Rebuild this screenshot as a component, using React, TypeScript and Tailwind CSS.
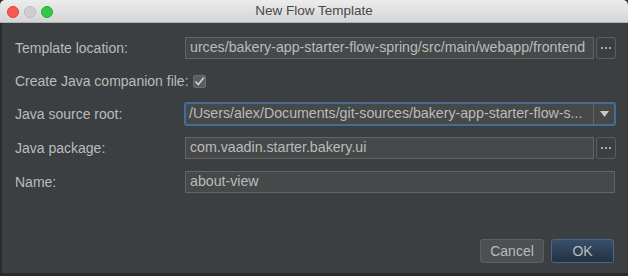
import React from 'react';

const FONT = { fontFamily: '"Liberation Sans", Arial, sans-serif' };

function Field({ value, wide = false }: { value: string; wide?: boolean }) {
  return (
    <div className={`h-[22px] ${wide ? 'w-[430px]' : 'w-[409px]'} bg-[#45494a] border border-[#646464] flex items-center px-[4px] overflow-hidden whitespace-nowrap text-[14.2px] text-[#bbbbbb]`}>
      {value}
    </div>
  );
}

function Browse() {
  return (
    <div className="h-[22px] w-[20px] ml-[2px] rounded-[3px] border border-[#5b5d5f] bg-[#3c3f41] flex items-center justify-center gap-[2px]">
      <span className="w-[2px] h-[2px] bg-[#a8a8a8]" />
      <span className="w-[2px] h-[2px] bg-[#a8a8a8]" />
      <span className="w-[2px] h-[2px] bg-[#a8a8a8]" />
    </div>
  );
}

function Row({ label, children, className = '' }: { label: string; children: React.ReactNode; className?: string }) {
  return (
    <div className={`flex items-center ${className}`}>
      <div className="w-[170px] shrink-0 text-[14px] text-[#bbbbbb]">{label}</div>
      {children}
    </div>
  );
}

export default function App() {
  return (
    <div className="w-[628px] h-[276px] bg-[#2b2b2b] flex flex-col" style={FONT}>
      {/* Title bar */}
      <div className="h-[23px] shrink-0 relative flex items-center justify-center bg-gradient-to-b from-[#ececec] to-[#d5d5d5] border-b border-[#b4b4b4] rounded-t-[5px]">
        <div className="absolute left-[7px] top-[6px] flex gap-[5px]">
          <span className="w-[12px] h-[12px] rounded-full bg-[#fc5753] border border-[#df3e3a]" />
          <span className="w-[12px] h-[12px] rounded-full bg-[#cfcfcf] border border-[#bcbcbc]" />
          <span className="w-[12px] h-[12px] rounded-full bg-[#33c748] border border-[#27aa35]" />
        </div>
        <span className="text-[13.5px] text-[#4a4a4a]">New Flow Template</span>
      </div>

      {/* Body */}
      <div className="flex-1 ml-[2px] mb-[3px] bg-[#3c3f41] flex flex-col pl-[13px] pt-[14px]">
        <Row label="Template location:">
          <Field value="urces/bakery-app-starter-flow-spring/src/main/webapp/frontend" />
          <Browse />
        </Row>

        <div className="flex items-center gap-[4px] mt-[12px]">
          <span className="text-[14px] text-[#bbbbbb]">Create Java companion file:</span>
          <div className="w-[13px] h-[13px] rounded-[2px] bg-[#5a5d5f] border border-[#6b6e70] flex items-center justify-center">
            <svg width="11" height="11" viewBox="0 0 11 11">
              <path d="M1.5 5.5 L4.3 8.6 L9.8 1.4" fill="none" stroke="#d0d0d0" strokeWidth="1.6" />
            </svg>
          </div>
        </div>

        <Row label="Java source root:" className="mt-[10px]">
          <div className="-ml-[1px] h-[24px] w-[432px] rounded-[3px] border-2 border-[#466d94] bg-[#45494a] flex items-center overflow-hidden">
            <div className="flex-1 px-[3px] whitespace-nowrap text-[14.2px] text-[#bbbbbb] overflow-hidden">
              /Users/alex/Documents/git-sources/bakery-app-starter-flow-s...
            </div>
            <div className="w-[21px] h-full border-l border-[#646464] flex items-center justify-center">
              <svg width="9" height="6" viewBox="0 0 9 6">
                <path d="M0 0 H9 L4.5 6 Z" fill="#c8c8c8" />
              </svg>
            </div>
          </div>
        </Row>

        <Row label="Java package:" className="mt-[11px]">
          <Field value="com.vaadin.starter.bakery.ui" />
          <Browse />
        </Row>

        <Row label="Name:" className="mt-[12px]">
          <Field value="about-view" wide />
        </Row>

        <div className="flex justify-end gap-[7px] pr-[14px] mt-[46px]">
          <div className="w-[64px] h-[24px] rounded-[3px] bg-[#4c5052] border border-[#5e6060] flex items-center justify-center text-[14px] text-[#bbbbbb]">
            Cancel
          </div>
          <div className="w-[63px] h-[24px] rounded-[3px] bg-gradient-to-b from-[#384f6b] to-[#233143] border border-[#4c6584] flex items-center justify-center text-[14px] text-[#bbbbbb]">
            OK
          </div>
        </div>
      </div>
    </div>
  );
}
